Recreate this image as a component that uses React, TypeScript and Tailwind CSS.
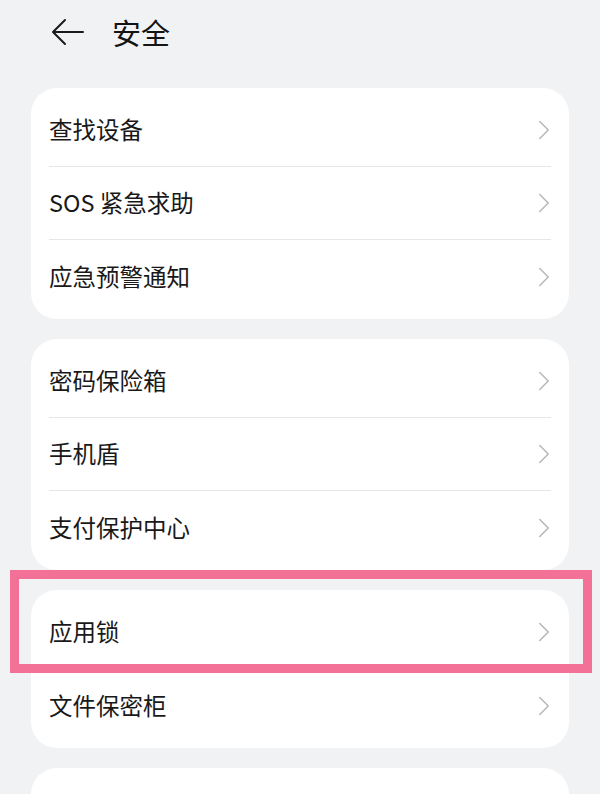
import { ChevronRight } from 'lucide-react';

const GROUPS = [
  ['查找设备', 'SOS 紧急求助', '应急预警通知'],
  ['密码保险箱', '手机盾', '支付保护中心'],
  ['应用锁', '文件保密柜'],
];

function Row({ label, last }: { label: string; last: boolean }) {
  return (
    <div className="px-[18px]">
      <div className={`h-[73px] flex items-center justify-between ${last ? '' : 'border-b border-[#e6e6e8]'}`}>
        <span className="text-[23.5px] text-[#191919] leading-none">{label}</span>
        <ChevronRight className="h-[34px] w-[34px] text-[#b8b8bb] -mr-[10px]" strokeWidth={1.1} />
      </div>
    </div>
  );
}

export default function App() {
  return (
    <div
      className="relative w-[600px] h-[794px] overflow-hidden bg-[#f1f2f4]"
      style={{ fontFamily: '"Noto Sans CJK SC", "Noto Sans", sans-serif' }}
    >
      {/* Header */}
      <div className="h-[88px] flex items-start pt-[12px] pl-[50px] gap-[26px]">
        <svg width="36" height="40" viewBox="0 0 36 40" fill="none" stroke="#1a1a1a" strokeWidth="2" strokeLinecap="round" strokeLinejoin="round">
          <path d="M33 20H4" />
          <path d="M15 8L3 20L15 32" />
        </svg>
        <h1 className="text-[29px] text-[#141414] leading-[40px]">安全</h1>
      </div>

      {/* Groups */}
      <div className="flex flex-col gap-[20px] px-[31px]">
        {GROUPS.map((items, gi) => (
          <div key={gi} className="bg-white rounded-[26px] py-[6px]">
            {items.map((label, i) => (
              <Row key={label} label={label} last={i === items.length - 1} />
            ))}
          </div>
        ))}
        <div className="bg-white rounded-[26px] h-[80px]" />
      </div>

      {/* Highlight annotation */}
      <div className="absolute left-[10px] top-[570px] w-[582px] h-[103px] border-[9px] border-[#f37196] pointer-events-none" />
    </div>
  );
}
